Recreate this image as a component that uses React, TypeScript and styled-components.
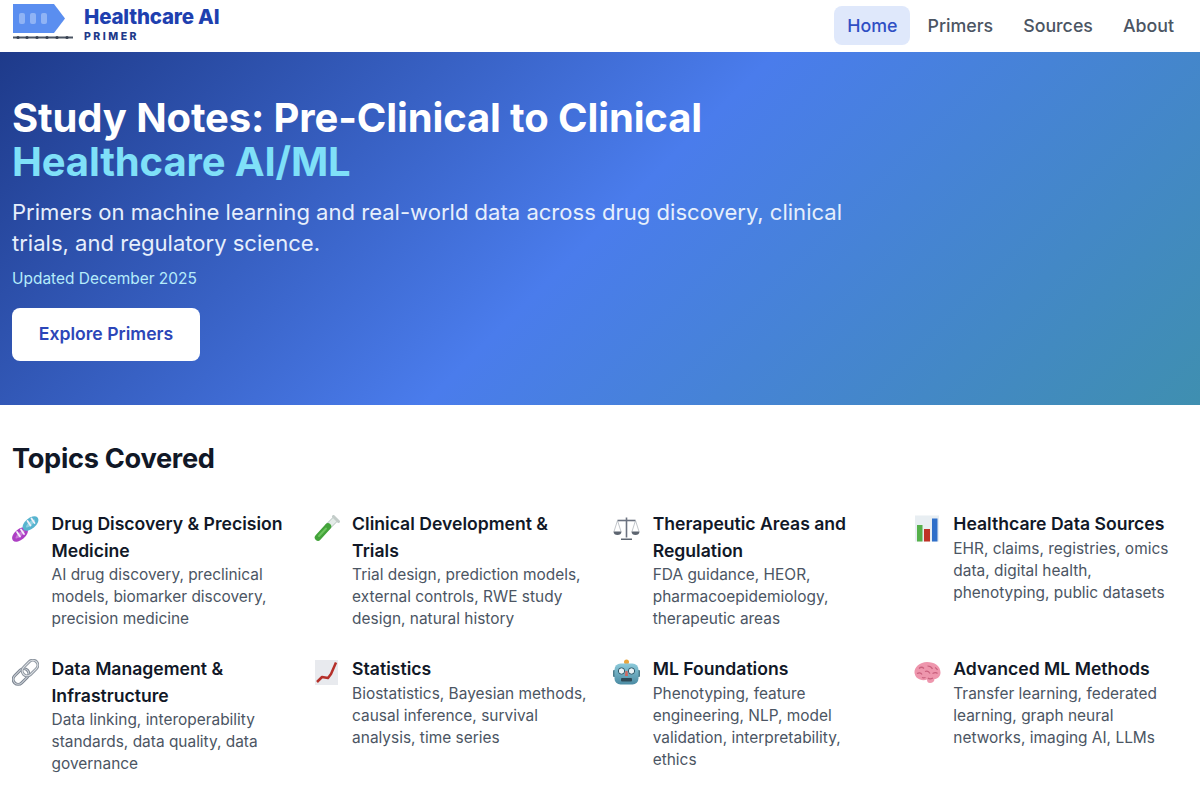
import React, { ReactElement } from 'react';
import styled, { createGlobalStyle } from 'styled-components';

const Global = createGlobalStyle`
  html, body {
    margin: 0;
    padding: 0;
    background: #fff;
    font-family: Inter, "Liberation Sans", sans-serif;
    color: #111827;
  }
  * { box-sizing: border-box; }
`;

const Page = styled.div`
  width: 100%;
  height: 785px;
  overflow: hidden;
`;
const Header = styled.header`
  height: 52px;
  display: flex;
  align-items: flex-start;
  justify-content: space-between;
  padding: 0 13px 0 12px;
  background: #fff;
`;
const Brand = styled.a`
  display: flex;
  align-items: flex-start;
  gap: 10px;
  padding-top: 4px;
`;
const BrandText = styled.div`
  display: flex;
  flex-direction: column;
  margin-top: 2px;
`;
const BrandName = styled.span`
  font-size: 20.5px;
  line-height: 22px;
  font-weight: 800;
  color: #1e40af;
  letter-spacing: -0.2px;
`;
const BrandSub = styled.span`
  margin-top: 2px;
  font-size: 10.5px;
  line-height: 14px;
  font-weight: 800;
  letter-spacing: 2.5px;
  color: #1e3a8a;
`;
const Nav = styled.nav`
  display: flex;
  align-items: center;
  gap: 4px;
  padding-top: 6px;
`;
const NavLink = styled.a<{ $active?: boolean }>`
  height: 39px;
  padding: 0 13px 1px;
  display: flex;
  align-items: center;
  border-radius: 8px;
  font-size: 17.8px;
  font-weight: 500;
  color: ${(p) => (p.$active ? '#2f4fc4' : '#4b5563')};
  background: ${(p) => (p.$active ? '#dfe8fb' : 'transparent')};
`;
const Hero = styled.section`
  height: 353px;
  padding: 44px 12px;
  background: linear-gradient(135deg, #1e3a8a 0%, #4a7cec 50%, #3f8fb0 100%);
  color: #fff;
`;
const Title = styled.h1`
  margin: 0 0 13px;
  font-size: 40px;
  line-height: 44px;
  font-weight: 700;
  letter-spacing: -0.13px;
`;
const Accent = styled.span`
  display: block;
  color: #7fe0f8;
`;
const Lead = styled.p`
  margin: 0 0 8px;
  max-width: 860px;
  font-size: 22.05px;
  line-height: 31px;
  color: #e6effc;
`;
const Updated = styled.p`
  margin: 0 0 17px;
  font-size: 15.45px;
  line-height: 24px;
  color: #b5ecfb;
`;
const Cta = styled.a`
  display: inline-flex;
  align-items: center;
  justify-content: center;
  width: 188px;
  height: 53px;
  padding-bottom: 2px;
  border-radius: 8px;
  background: #fff;
  font-size: 17.6px;
  font-weight: 600;
  color: #2c46b8;
`;
const Topics = styled.section`
  padding: 36px 10px 0 12px;
`;
const TopicsTitle = styled.h2`
  margin: 0 0 35px;
  font-size: 27.2px;
  line-height: 35px;
  font-weight: 700;
  letter-spacing: -0.3px;
  color: #111827;
`;
const Grid = styled.div`
  display: grid;
  grid-template-columns: repeat(4, 275px);
  column-gap: 25.6px;
  row-gap: 25.8px;
`;
const Item = styled.article`
  display: flex;
  gap: 12.5px;
`;
const Icon = styled.div`
  flex: none;
  width: 27px;
  height: 27px;
  margin-top: 3.5px;
  svg { display: block; width: 27px; height: 27px; }
`;
const ItemBody = styled.div`
  min-width: 0;
`;
const ItemTitle = styled.h3`
  margin: 0;
  font-size: 17.6px;
  line-height: 26.6px;
  font-weight: 600;
  color: #111827;
`;
const ItemText = styled.p`
  margin: 0;
  font-size: 15.45px;
  line-height: 22px;
  color: #4b5563;
`;

const Logo = () => (
  <svg width="62" height="36" viewBox="0 0 62 36" style={{ display: 'block' }}>
    <path d="M1 0h41l11 14.500-11 14.500H1z" fill="#5a8ef0" />
    <rect x="7" y="9" width="6" height="11" rx="2" fill="#8fb3f5" />
    <rect x="18" y="9" width="6" height="11" rx="2" fill="#8fb3f5" />
    <rect x="29" y="9" width="6" height="11" rx="2" fill="#8fb3f5" />
    <rect x="1" y="32.500" width="60" height="2" fill="#4b5563" />
    {[6, 15, 25, 35, 45, 55].map((x) => (
      <circle key={x} cx={x} cy="33.500" r="1.600" fill="#374151" />
    ))}
  </svg>
);

const Dna = () => (
  <svg viewBox="0 0 27 27" fill="none">
    <ellipse cx="8" cy="19.500" rx="7.500" ry="3.600" transform="rotate(-40 8 19.500)" fill="#c877d8" stroke="#ad3fc4" strokeWidth="3.400" />
    <ellipse cx="18.500" cy="8.500" rx="7.500" ry="3.600" transform="rotate(-40 18.500 8.500)" fill="#8acfe0" stroke="#57b4cf" strokeWidth="3.400" />
    <path d="M5 17l3 4.500M9 14.500l3 4.500M15.500 6l3 4.500M19.500 3.500l3 4.500" stroke="#f3f1f9" strokeWidth="1.800" strokeLinecap="round" />
  </svg>
);
const TestTube = () => (
  <svg viewBox="0 0 27 27" fill="none">
    <path d="M14 12.500L22.500 4" stroke="#b9c6c1" strokeWidth="6.500" />
    <path d="M14 12.500L22.500 4" stroke="#e4ebe8" strokeWidth="5" />
    <path d="M5 22.500L15 11.500" stroke="#43a33a" strokeWidth="6.500" strokeLinecap="round" />
    <path d="M6 21L13 13.500" stroke="#6cc45e" strokeWidth="2" strokeLinecap="round" />
    <path d="M20.500 1.500l5 5" stroke="#c3ccc9" strokeWidth="3" strokeLinecap="round" />
  </svg>
);
const Scales = () => (
  <svg viewBox="0 0 27 27" fill="none">
    <path d="M13.500 2.500v20" stroke="#6b7280" strokeWidth="1.600" />
    <path d="M4.500 5.500h18" stroke="#6b7280" strokeWidth="1.600" />
    <path d="M4.500 5.500L1 16.500M4.500 5.500L8 16.500M22.500 5.500L19 16.500M22.500 5.500L26 16.500" stroke="#a7adb5" strokeWidth=".7" />
    <path d="M0.500 16.500h8c0 2.500-1.800 3.500-4 3.500s-4-1-4-3.500zM18.500 16.500h8c0 2.500-1.800 3.500-4 3.500s-4-1-4-3.500z" fill="#5d6570" />
    <path d="M8 23.500h11v1.500H8z" fill="#5d6570" />
  </svg>
);
const Bars = () => (
  <svg viewBox="0 0 27 27">
    <rect x="1" y="0.500" width="24" height="26" fill="#e8eef2" />
    <rect x="3" y="10" width="5.500" height="16.500" fill="#55b04a" />
    <rect x="10" y="14" width="6" height="12.500" fill="#bf3327" />
    <rect x="18" y="3.500" width="5.500" height="23" fill="#2f6fc9" />
  </svg>
);
const Link = () => (
  <svg viewBox="0 0 27 27" fill="none">
    <rect x="0" y="12.500" width="18" height="10" rx="5" transform="rotate(-45 9 17.500)" stroke="#7c8591" strokeWidth="3" />
    <rect x="0" y="12.500" width="18" height="10" rx="5" transform="rotate(-45 9 17.500)" stroke="#cdd2d8" strokeWidth="1" />
    <rect x="9" y="4" width="18" height="10" rx="5" transform="rotate(-45 18 9)" stroke="#8f97a1" strokeWidth="3" />
    <rect x="9" y="4" width="18" height="10" rx="5" transform="rotate(-45 18 9)" stroke="#dde1e5" strokeWidth="1" />
  </svg>
);
const Chart = () => (
  <svg viewBox="0 0 27 27" fill="none">
    <rect x="2" y="1" width="23" height="25" fill="#e8eaee" />
    <path d="M4 23l5-5 6 1 3-4 5-11.500" stroke="#b5302a" strokeWidth="2.500" strokeLinejoin="round" />
  </svg>
);
const Robot = () => (
  <svg viewBox="0 0 27 27">
    <defs>
      <linearGradient id="robotHead" x1="0" y1="0" x2="0" y2="1">
        <stop offset="0" stopColor="#8ccada" />
        <stop offset="1" stopColor="#4b8ba3" />
      </linearGradient>
    </defs>
    <circle cx="13.500" cy="3" r="2.500" fill="#eaa53c" />
    <rect x="0" y="11" width="3" height="7" rx="1" fill="#4d7d8c" />
    <rect x="24" y="11" width="3" height="7" rx="1" fill="#4d7d8c" />
    <rect x="1.500" y="4.500" width="24" height="21" rx="6" fill="url(#robotHead)" />
    <circle cx="8.500" cy="12" r="3.200" fill="#e8f2f5" stroke="#2d5a6b" />
    <circle cx="18.500" cy="12" r="3.200" fill="#e8f2f5" stroke="#2d5a6b" />
    <path d="M12.500 12h2l.5 5h-3z" fill="#d0665e" />
    <rect x="8" y="19" width="11" height="3.500" rx="1" fill="#2e4a57" />
  </svg>
);
const Brain = () => (
  <svg viewBox="0 0 27 27">
    <path d="M0.500 14C0 8 6 3 13 3c7.500 0 13.500 4 13.500 10.500 0 4-3 6.500-6 6.500 0 2.500-2 4-4.500 4-2 0-3-1-3-3.500-2 1-5 1-7 0-3-1-5-3-5.500-6.500z" fill="#ee96ad" />
    <path d="M5 9.500c2-2 4-1 5 0M13.500 7c2 0 4 1 5 3M3 14.500c2-1 4-1 5 1M11 12.500c2-1 4 0 5 2M18.500 14.500c2-1 4-1 5 0M14 19c1 1 3 1 5 0M8 18.500c1 .5 2 .5 3.500 0M21 8.500c1 .5 2 1.500 2.500 2.500" stroke="#c9607d" strokeWidth="1.200" fill="none" />
  </svg>
);

const topics = [
  { icon: <Dna />, title: 'Drug Discovery & Precision Medicine', text: 'AI drug discovery, preclinical models, biomarker discovery, precision medicine' },
  { icon: <TestTube />, title: 'Clinical Development & Trials', text: 'Trial design, prediction models, external controls, RWE study design, natural history' },
  { icon: <Scales />, title: 'Therapeutic Areas and Regulation', text: 'FDA guidance, HEOR, pharmacoepidemiology, therapeutic areas' },
  { icon: <Bars />, title: 'Healthcare Data Sources', text: 'EHR, claims, registries, omics data, digital health, phenotyping, public datasets' },
  { icon: <Link />, title: 'Data Management & Infrastructure', text: 'Data linking, interoperability standards, data quality, data governance' },
  { icon: <Chart />, title: 'Statistics', text: 'Biostatistics, Bayesian methods, causal inference, survival analysis, time series' },
  { icon: <Robot />, title: 'ML Foundations', text: 'Phenotyping, feature engineering, NLP, model validation, interpretability, ethics' },
  { icon: <Brain />, title: 'Advanced ML Methods', text: 'Transfer learning, federated learning, graph neural networks, imaging AI, LLMs' },
];

export default function App(): ReactElement {
  return (
    <Page>
      <Global />
      <Header>
        <Brand>
          <Logo />
          <BrandText>
            <BrandName>Healthcare AI</BrandName>
            <BrandSub>PRIMER</BrandSub>
          </BrandText>
        </Brand>
        <Nav>
          <NavLink $active>Home</NavLink>
          <NavLink>Primers</NavLink>
          <NavLink>Sources</NavLink>
          <NavLink>About</NavLink>
        </Nav>
      </Header>
      <Hero>
        <Title>
          Study Notes: Pre-Clinical to Clinical
          <Accent>Healthcare AI/ML</Accent>
        </Title>
        <Lead>
          Primers on machine learning and real-world data across drug discovery, clinical trials, and regulatory science.
        </Lead>
        <Updated>Updated December 2025</Updated>
        <Cta>Explore Primers</Cta>
      </Hero>
      <Topics>
        <TopicsTitle>Topics Covered</TopicsTitle>
        <Grid>
          {topics.map((t) => (
            <Item key={t.title}>
              <Icon>{t.icon}</Icon>
              <ItemBody>
                <ItemTitle>{t.title}</ItemTitle>
                <ItemText>{t.text}</ItemText>
              </ItemBody>
            </Item>
          ))}
        </Grid>
      </Topics>
    </Page>
  );
}
